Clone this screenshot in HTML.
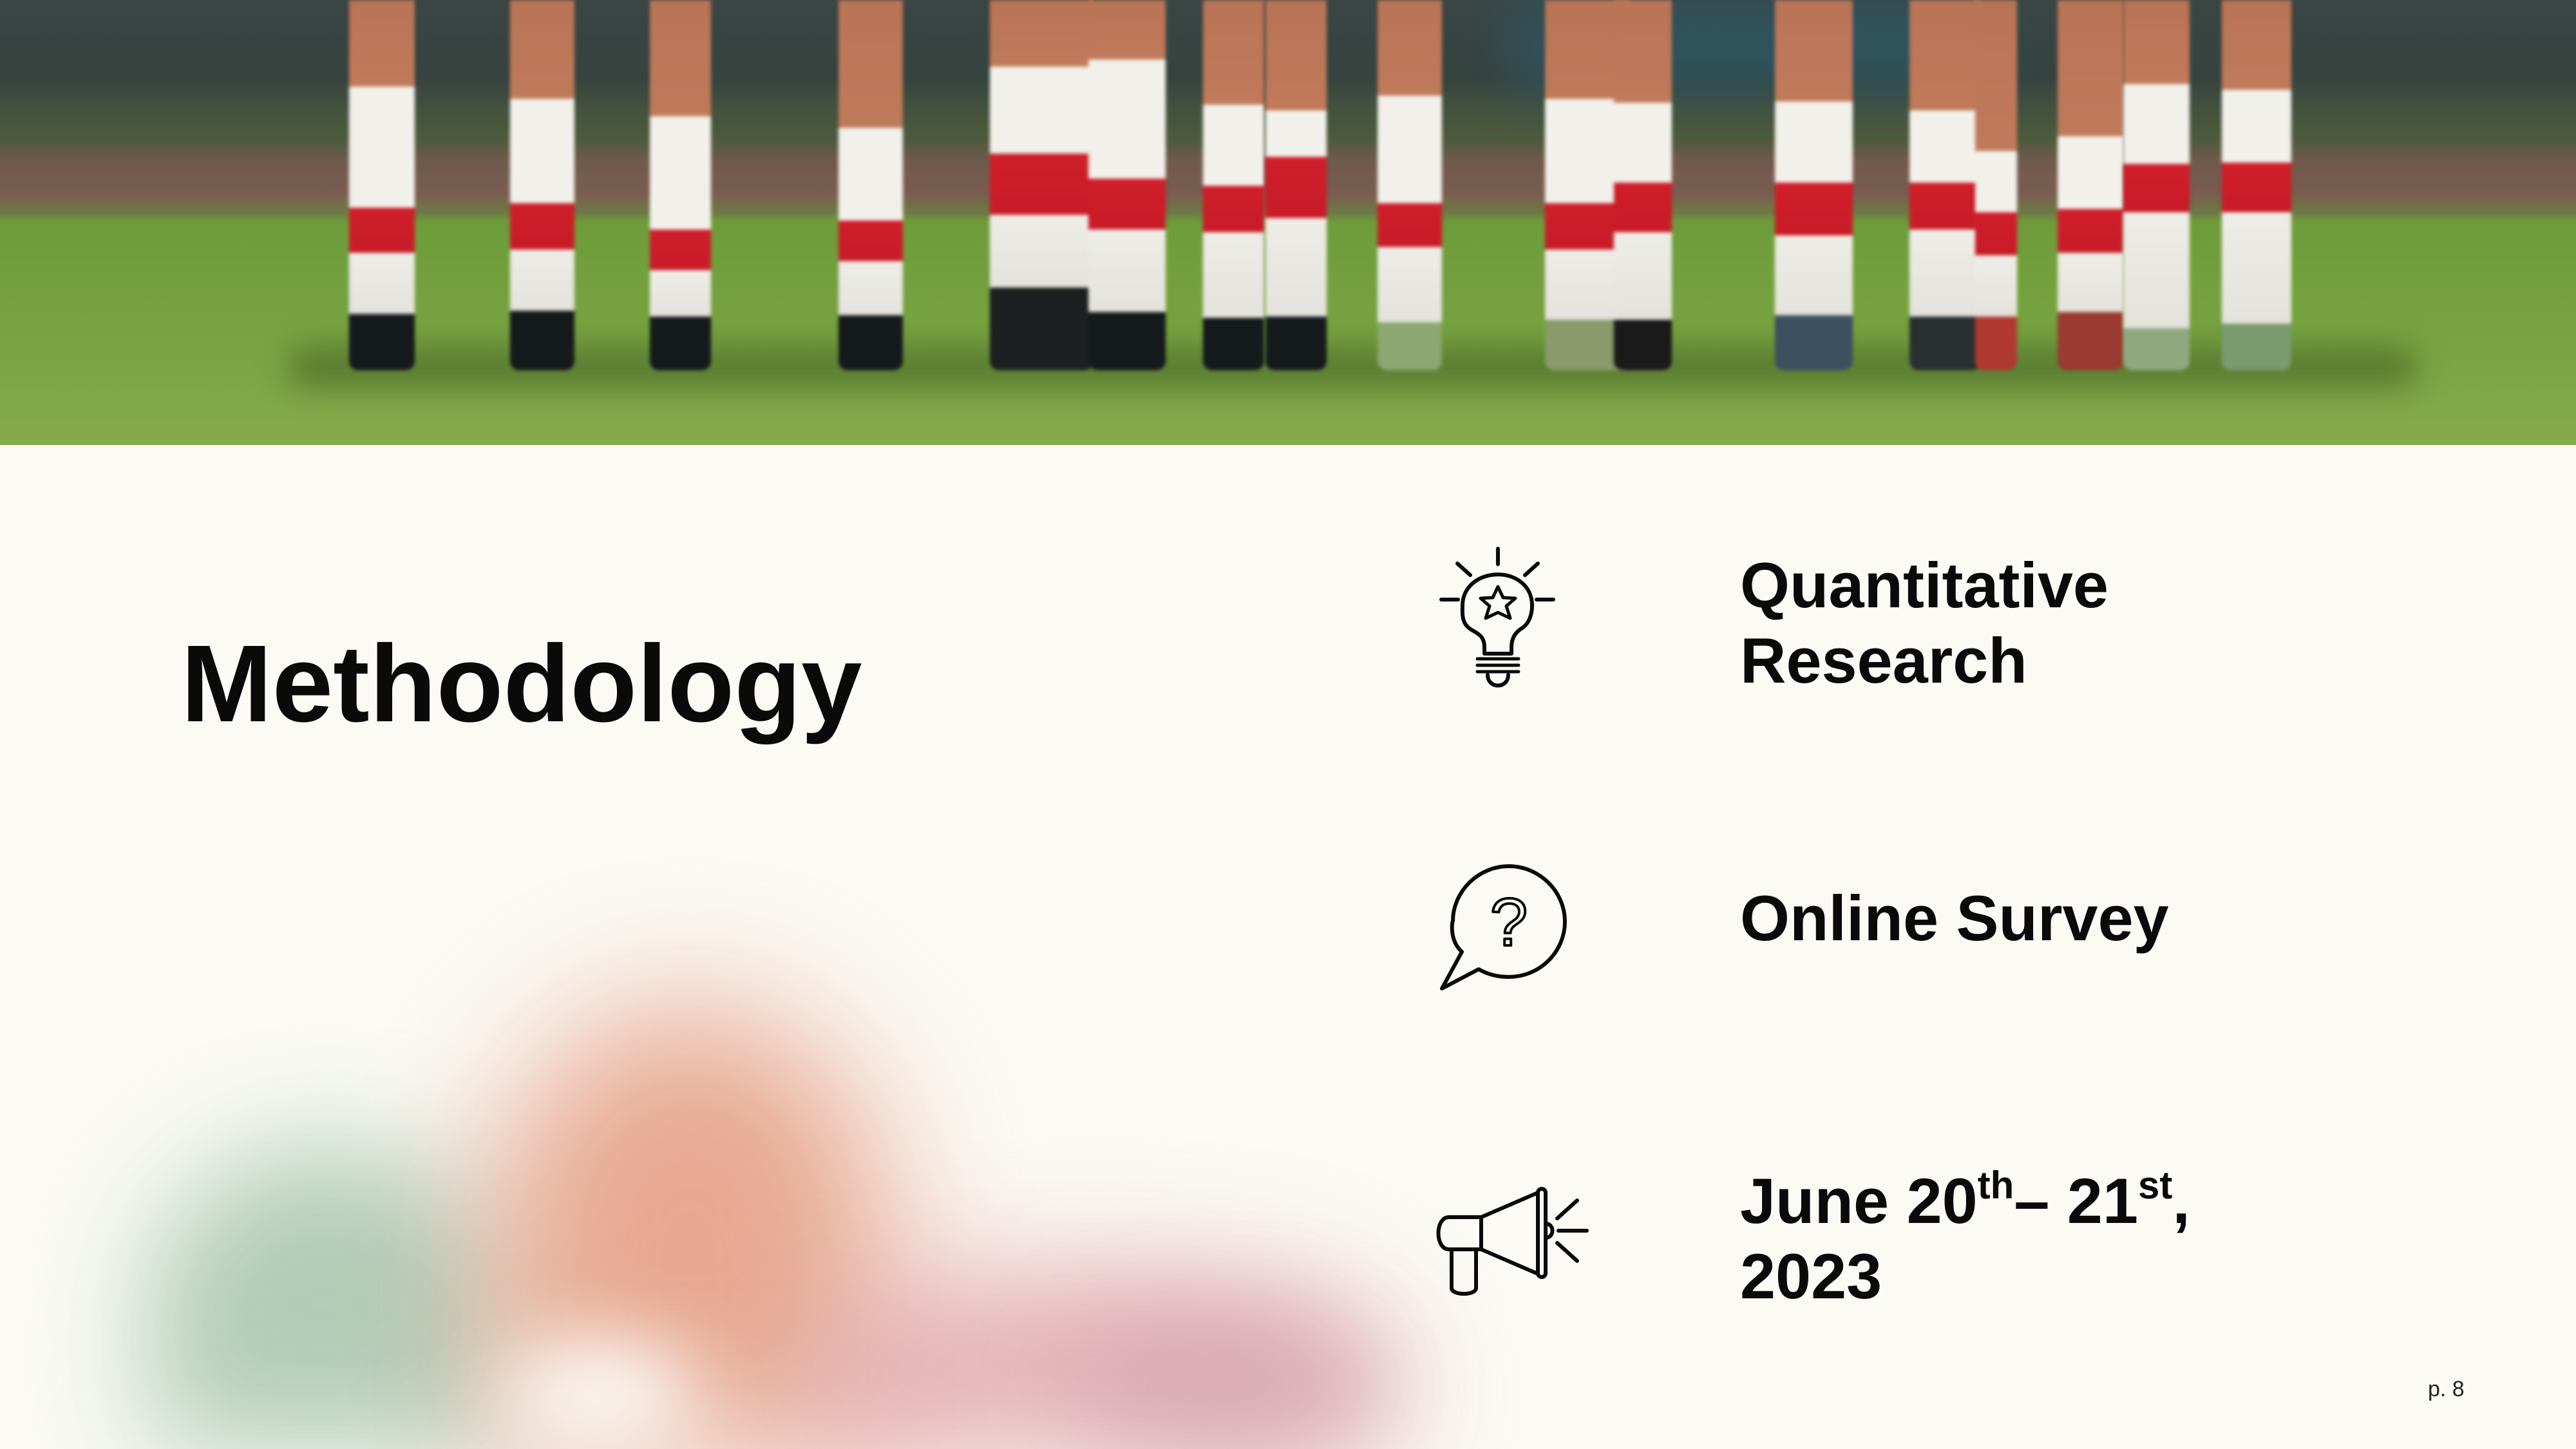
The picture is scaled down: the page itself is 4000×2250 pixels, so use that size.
<!DOCTYPE html>
<html><head><meta charset="utf-8"><style>
html,body{margin:0;padding:0;overflow:hidden;width:4000px;height:2250px}
#wrap{width:4000px;height:2250px;position:relative;overflow:hidden;background:#fbfaf5;font-family:"Liberation Sans",sans-serif;contain:paint;}
#photo{position:absolute;left:0;top:0;width:4000px;height:691px;overflow:hidden;
background:linear-gradient(180deg,#3a4644 0px,#36433f 120px,#44523f 170px,#4d5a3c 215px,#6f5a4c 250px,#7a5d50 300px,#6d7a45 330px,#6e9c3a 345px,#76a33f 500px,#84ab4c 691px);}
.blue{position:absolute;left:2350px;top:0;width:750px;height:140px;background:#2c5a6a;filter:blur(40px);opacity:.7}
.leg{position:absolute;top:0;filter:blur(3px);border-radius:0 0 14px 14px}
.shadow{position:absolute;left:450px;top:540px;width:3300px;height:60px;background:#3f5a22;filter:blur(25px);opacity:.6}
.blob{position:absolute;border-radius:50%}
.t{position:absolute;font-weight:bold;color:#0a0a0a;white-space:nowrap}
sup{font-size:60px;line-height:0;vertical-align:0;position:relative;top:-38px}
</style></head><body><div id="wrap">
<div id="photo">
<div class="blue"></div>
<div class="shadow"></div>
<div id="legs"></div>
</div>
<script>
var L=[[536,650,135,323,393,488,'#151a1c'],[786,898,154,316,388,483,'#151a1c'],[1003,1110,181,357,420,492,'#151a1c'],[1296,1408,199,343,406,490,'#151a1c'],[1531,1704,104,239,334,447,'#1c2020'],[1684,1816,93,278,357,485,'#151a1c'],[1862,1969,163,289,361,494,'#151a1c'],[1959,2066,172,244,339,492,'#151a1c'],[2133,2245,149,316,384,501,'#8aa870'],[2393,2538,154,316,388,497,'#8a9a6a'],[2500,2602,160,284,361,497,'#1a1a1a'],[2750,2883,158,284,366,490,'#3c5060'],[2959,3082,172,284,357,492,'#2a3030'],[3061,3138,235,330,397,492,'#b03a30'],[3189,3304,212,325,393,485,'#9a3a30'],[3291,3406,131,255,330,510,'#90a880'],[3444,3564,140,253,330,503,'#7a9a70']];
var h='';L.forEach(function(a){var w=a[1]-a[0];
h+='<div class="leg" style="left:'+(a[0]+6)+'px;width:'+(w-12)+'px;height:575px;background:linear-gradient(180deg,#b97456 0,#c07a5a '+(a[2]-1)+'px,#f2f0ea '+a[2]+'px,#f2f0ea '+(a[3]-1)+'px,#d01e2a '+a[3]+'px,#c81c28 '+(a[4]-1)+'px,#eeece6 '+a[4]+'px,#e4e2dc '+(a[5]-1)+'px,'+a[6]+' '+a[5]+'px,'+a[6]+' 575px)"></div>';});
document.getElementById('legs').innerHTML=h;
</script>

<div class="blob" style="left:230px;top:1780px;width:560px;height:470px;background:#a9c7b0;filter:blur(90px);opacity:.9;border-radius:50% 50% 0 0"></div>
<div class="blob" style="left:760px;top:1560px;width:620px;height:690px;background:#e6a48c;filter:blur(110px);opacity:.95;border-radius:50% 50% 0 0"></div>
<div class="blob" style="left:1250px;top:1980px;width:900px;height:270px;background:#e0a4aa;filter:blur(100px);opacity:.9;border-radius:50% 50% 0 0"></div>
<div class="blob" style="left:1650px;top:2050px;width:500px;height:200px;background:#d4a6b4;filter:blur(80px);opacity:.8"></div>
<div class="blob" style="left:780px;top:2080px;width:300px;height:170px;background:#fbfaf5;filter:blur(60px)"></div>

<div class="t" style="left:281px;top:962px;font-size:170px;line-height:200px;">Methodology</div>
<div class="t" style="left:2702px;top:850px;font-size:99px;line-height:117px;">Quantitative<br>Research</div>
<div class="t" style="left:2702px;top:1367px;font-size:99px;line-height:117px;">Online Survey</div>
<div class="t" style="left:2702px;top:1806px;font-size:99px;line-height:117px;">June 20<sup>th</sup>– 21<sup>st</sup>,<br>2023</div>
<div style="position:absolute;left:3770px;top:2138px;font-size:34px;color:#222;">p. 8</div>

<svg width="4000" height="2250" style="position:absolute;left:0;top:0" fill="none" stroke="#0a0a0a" stroke-width="6" stroke-linecap="round" stroke-linejoin="round">
<line x1="2326" y1="852" x2="2326" y2="876"/>
<line x1="2263" y1="875" x2="2283" y2="893"/>
<line x1="2368" y1="893" x2="2388" y2="875"/>
<line x1="2238" y1="931" x2="2264" y2="931"/>
<line x1="2386" y1="931" x2="2412" y2="931"/>
<path d="M2305,1015 L2305,1005 C2305,990 2298,985 2285,978 C2268,968 2271,950 2271,940 C2271,910 2298,892 2326,892 C2354,892 2379,910 2379,940 C2379,955 2374,968 2364,975 C2352,982 2347,992 2347,1005 L2347,1015 Z"/>
<path d="M2326,911 L2334,928 L2353,929 L2339,941 L2345,960 L2326,951 L2307,960 L2313,941 L2299,929 L2318,928 Z" stroke-width="5"/>
<path d="M2294,1023 H2358 M2294,1033 H2358 M2294,1043 H2358" stroke-width="5"/>
<path d="M2310,1048 C2310,1070 2342,1070 2342,1048"/>
<path d="M2270,1478 C2250,1460 2255,1430 2256,1430 C2256,1385 2295,1345 2343,1345 C2391,1345 2430,1385 2430,1431 C2430,1478 2391,1517 2343,1517 C2325,1517 2310,1513 2296,1505 L2239,1535 Z"/>
<text x="2343" y="1468" font-family="Liberation Sans,sans-serif" font-size="105" text-anchor="middle" stroke-width="4" fill="none">?</text>
<path d="M2300,1890 L2250,1890 C2228,1890 2228,1940 2250,1940 L2300,1940 Z"/>
<path d="M2300,1890 L2388,1852 L2388,1978 L2300,1940"/>
<rect x="2388" y="1846" width="12" height="137" rx="6"/>
<path d="M2400,1900 C2414,1900 2414,1922 2400,1922"/>
<path d="M2254,1940 L2254,2000 C2254,2012 2292,2012 2292,2000 L2292,1940"/>
<line x1="2418" y1="1892" x2="2449" y2="1864"/>
<line x1="2420" y1="1911" x2="2464" y2="1911"/>
<line x1="2418" y1="1930" x2="2449" y2="1958"/>
</svg>
</div></body></html>
